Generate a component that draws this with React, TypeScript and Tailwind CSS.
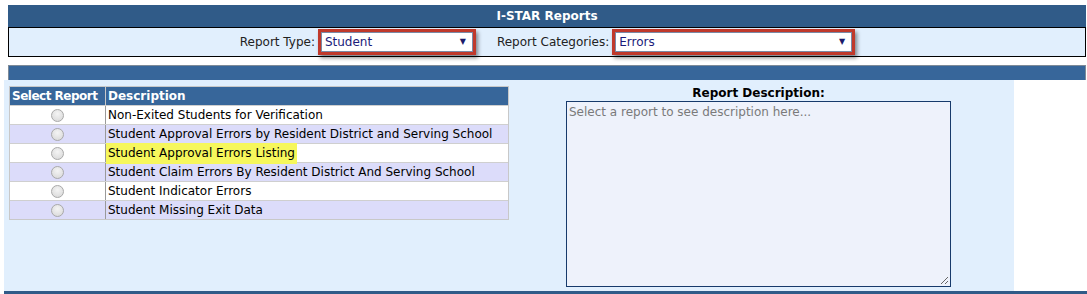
import React from "react";

const rows = [
  "Non-Exited Students for Verification",
  "Student Approval Errors by Resident District and Serving School",
  "Student Approval Errors Listing",
  "Student Claim Errors By Resident District And Serving School",
  "Student Indicator Errors",
  "Student Missing Exit Data",
];

function Radio() {
  return (
    <div className="w-[13px] h-[13px] rounded-full border border-[#a9a9a9] bg-[radial-gradient(circle_at_50%_35%,#f4f4f4,#d6d6d6)]" />
  );
}

function Select({ value, width }: { value: string; width: number }) {
  return (
    <div
      className="border-[3px] border-[#c0392b] shadow-[2px_3px_4px_rgba(0,0,0,0.45)] h-[26px] flex"
      style={{ width }}
    >
      <div className="flex-1 bg-white border border-[#7a8aa6] flex items-center justify-between pl-[3px] pr-[6px]">
        <span className="text-[#1b1b7a] text-[12px] leading-none">{value}</span>
        <span className="text-[#1b1b6a] text-[8px] leading-none">▼</span>
      </div>
    </div>
  );
}

export default function App() {
  return (
    <div
      className="w-[1087px] h-[294px] bg-white overflow-hidden text-[#222]"
      style={{ fontFamily: '"DejaVu Sans", Verdana, sans-serif' }}
    >
      <div className="pt-[5px] pl-[8px] w-[1086px]">
        <div className="h-[22px] bg-[#305b88] flex items-center justify-center text-white font-bold text-[12px]">
          I-STAR Reports
        </div>
        <div className="h-[30px] bg-[#e1effd] border border-black flex items-center justify-center gap-[3px] pl-[8px]">
          <span className="text-[12px]">Report Type:</span>
          <Select value="Student" width={158} />
          <span className="text-[12px] ml-[18px]">Report Categories:</span>
          <Select value="Errors" width={243} />
          <div className="w-[4px]" />
        </div>
      </div>
      <div className="ml-[8px] mt-[8px] w-[1078px] h-[15px] bg-[#37669a] border-t border-l border-r border-[#7d8a98]" />
      <div className="ml-[4px] w-[1010px] h-[211px] bg-[#e1effd] flex pt-[6px] pl-[5px]">
        <div className="w-[500px]">
          <div className="border border-[#c8c8c8]">
            <div className="flex h-[18px] bg-[#37669a] text-white font-bold text-[12px]">
              <div className="w-[96px] border-r border-[#c8c8c8] flex items-center pl-[2px] tracking-[-0.5px]">Select Report</div>
              <div className="flex-1 flex items-center pl-[2px]">Description</div>
            </div>
            {rows.map((r, i) => (
              <div
                key={r}
                className={`flex h-[19px] border-t border-[#cfcfcf] text-[12px] ${i % 2 === 1 ? "bg-[#dcdcfa]" : "bg-white"}`}
              >
                <div className="w-[96px] border-r border-[#9a9a9a] flex items-center justify-center">
                  <Radio />
                </div>
                <div className="flex-1 flex items-center text-black">
                  {i === 2 ? (
                    <span className="bg-[#f6f75c] pl-[2px] pr-[2px] py-[3px] leading-[15px]">{r}</span>
                  ) : (
                    <span className="pl-[2px]">{r}</span>
                  )}
                </div>
              </div>
            ))}
          </div>
        </div>
        <div className="ml-[57px] flex flex-col">
          <div className="w-[385px] text-center font-bold text-[12px] text-black h-[15px] leading-[15px]">
            Report Description:
          </div>
          <div className="w-[385px] h-[186px] bg-[#eef2fb] border border-[#173a6b] relative">
            <div className="text-[12px] text-[#7a7a7a] pl-[2px] pt-[1px]">
              Select a report to see description here...
            </div>
            <svg className="absolute right-[1px] bottom-[1px]" width="10" height="10" viewBox="0 0 10 10">
              <line x1="2" y1="9" x2="9" y2="2" stroke="#666" strokeWidth="1" />
              <line x1="6" y1="9" x2="9" y2="6" stroke="#666" strokeWidth="1" />
            </svg>
          </div>
        </div>
      </div>
      <div className="ml-[4px] h-[3px] bg-[#305b88]" />
    </div>
  );
}
